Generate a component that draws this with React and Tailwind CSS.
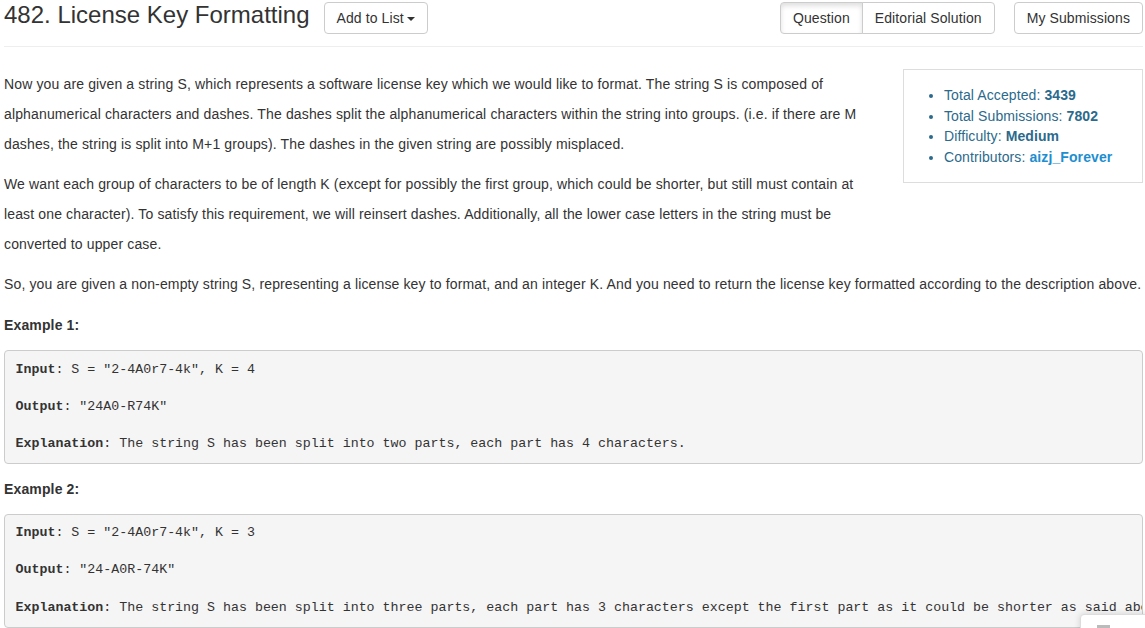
import React from "react";

const stats = [
  { label: "Total Accepted:", value: "3439" },
  { label: "Total Submissions:", value: "7802" },
  { label: "Difficulty:", value: "Medium" },
];

const examples = [
  {
    title: "Example 1:",
    input: '"2-4A0r7-4k", K = 4',
    output: '"24A0-R74K"',
    explanation: "The string S has been split into two parts, each part has 4 characters.",
  },
  {
    title: "Example 2:",
    input: '"2-4A0r7-4k", K = 3',
    output: '"24-A0R-74K"',
    explanation:
      "The string S has been split into three parts, each part has 3 characters except the first part as it could be shorter as said above.",
  },
];

const btn =
  "h-[32px] px-[12px] text-[14px] tracking-[0.1px] text-[#333] bg-white border border-[#ccc] flex items-center";

const App = () => {
  return (
    <div
      className="pl-[4px] pr-[2px] text-[#333] bg-white min-h-[628px] relative overflow-hidden"
      style={{ fontFamily: '"Liberation Sans", Arial, sans-serif' }}
    >
      {/* Header */}
      <div className="flex items-start h-[47px] border-b border-[#eee]">
        <h3 className="text-[24px] leading-[28px] mt-[1px] text-[#333]">
          482. License Key Formatting
        </h3>
        <button className={`${btn} rounded-[4px] ml-[14px] mt-[2px] gap-[3px]`}>
          Add to List
          <span className="w-0 h-0 border-x-[4px] border-x-transparent border-t-[4px] border-t-[#333] mt-[1px]" />
        </button>
        <div className="ml-auto flex mt-[2px]">
          <button
            className={`${btn} rounded-l-[4px] bg-[#e6e6e6] border-[#adadad] shadow-[inset_0_3px_5px_rgba(0,0,0,0.125)]`}
          >
            Question
          </button>
          <button className={`${btn} rounded-r-[4px] -ml-px`}>Editorial Solution</button>
        </div>
        <button className={`${btn} rounded-[4px] ml-[19px] mt-[2px]`}>My Submissions</button>
      </div>

      {/* Body */}
      <div className="pt-[22px] text-[14px] tracking-[0.14px] leading-[30px]">
        <div className="float-right w-[240px] ml-[40px] mb-[30px] border border-[#ddd] py-[15px] pl-[28px]">
          <ul className="list-disc pl-[12px] leading-[20.5px] tracking-[0.1px] text-[#2b6a8c] marker:text-[#2b6a8c]">
            {stats.map((s) => (
              <li key={s.label}>
                {s.label} <b>{s.value}</b>
              </li>
            ))}
            <li>
              Contributors: <b className="text-[#1d8ed0]">aizj_Forever</b>
            </li>
          </ul>
        </div>

        <p className="mb-[10px]">
          Now you are given a string S, which represents a software license key which we would like to format.
          The string S is composed of alphanumerical characters and dashes. The dashes split the alphanumerical
          characters within the string into groups. (i.e. if there are M dashes, the string is split into M+1
          groups). The dashes in the given string are possibly misplaced.
        </p>
        <p className="mb-[10px]">
          We want each group of characters to be of length K (except for possibly the first group, which could be
          shorter, but still must contain at least one character). To satisfy this requirement, we will reinsert
          dashes. Additionally, all the lower case letters in the string must be converted to upper case.
        </p>
        <p className="mb-[11px] whitespace-nowrap">
          So, you are given a non-empty string S, representing a license key to format, and an integer K. And you
          need to return the license key formatted according to the description above.
        </p>

        {examples.map((ex) => (
          <div key={ex.title}>
            <p className="mb-[10px] font-bold">{ex.title}</p>
            <pre
              className="mb-[10px] bg-[#f5f5f5] border border-[#ccc] rounded-[4px] px-[10.5px] py-[9.5px] text-[13.3px] tracking-normal leading-[18.57px] text-[#333] overflow-hidden whitespace-pre"
              style={{ fontFamily: '"Liberation Mono", "Courier New", monospace' }}
            >
              <b>Input</b>: S = {ex.input}
              {"\n\n"}
              <b>Output</b>: {ex.output}
              {"\n\n"}
              <b>Explanation</b>: {ex.explanation}
            </pre>
          </div>
        ))}
      </div>

      {/* floating widget corner */}
      <div className="absolute left-[1080px] top-[614px] w-[80px] h-[40px] bg-white border border-[#ddd] rounded-tl-[4px] shadow-[0_0_6px_rgba(0,0,0,0.15)]">
        <div className="ml-[16px] mt-[10px] w-[13px] h-[4px] bg-[#bbb]" />
      </div>
    </div>
  );
};

export default App;
